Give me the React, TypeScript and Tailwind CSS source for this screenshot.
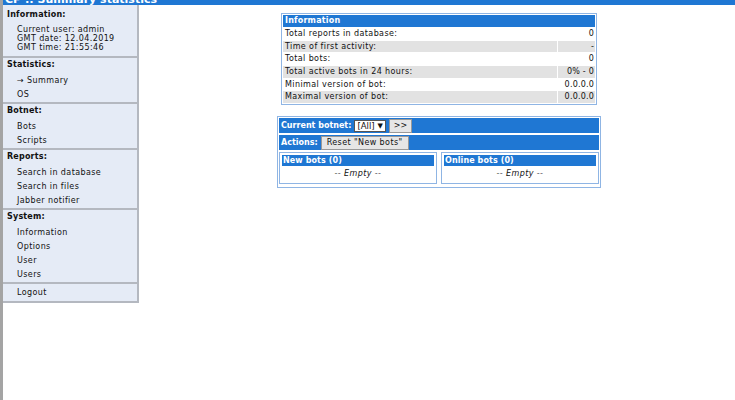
import React from "react";

const BLUE = "bg-[#1f77d3]";

function SideHeader({ children }: { children: React.ReactNode }) {
  return <div className="pl-[4px] h-[14px] leading-[14px] font-bold tracking-[0.2px] mb-[2px]">{children}</div>;
}

function SideItem({ children }: { children: React.ReactNode }) {
  return <div className="pl-[14px] h-[14px] leading-[14px]">{children}</div>;
}

function Section({ children }: { children: React.ReactNode }) {
  return <div className="border-b-2 border-b-[#b4b8c0]">{children}</div>;
}

const rows: [string, string][] = [
  ["Total reports in database:", "0"],
  ["Time of first activity:", "-"],
  ["Total bots:", "0"],
  ["Total active bots in 24 hours:", "0% - 0"],
  ["Minimal version of bot:", "0.0.0.0"],
  ["Maximal version of bot:", "0.0.0.0"],
];

function SubBox({ title }: { title: string }) {
  return (
    <div className="border border-[#8fb5e4] p-[2px] flex flex-col gap-[1px]">
      <div className={`${BLUE} text-white font-bold h-[11px] leading-[11px] px-[1px] tracking-[0.1px]`}>{title}</div>
      <div className="h-[14px] leading-[14px] text-center italic">-- Empty --</div>
    </div>
  );
}

export default function App() {
  return (
    <div
      className="w-[735px] h-[400px] overflow-hidden bg-white text-[8px] tracking-[0.4px] text-[#111] border-l-[3px] border-l-[#a4a4a4] flex flex-col"
      style={{ fontFamily: '"DejaVu Sans", Verdana, sans-serif' }}
    >
      <div className={`${BLUE} h-[5px] overflow-hidden shrink-0`}>
        <div className="text-white font-bold text-[11px] leading-[11px] mt-[-6px] pl-[2px] tracking-normal">CP :: Summary statistics</div>
      </div>
      <div className="flex flex-1 items-start">
        <div className="w-[136px] shrink-0 bg-[#e5ebf6] border-r-2 border-b-2 border-[#b4b8c0]">
          <div className="pt-[3px] pb-[4px] border-b-2 border-b-[#b4b8c0]">
            <div className="pl-[4px] h-[14px] leading-[14px] font-bold tracking-[0.2px]">Information:</div>
            <div className="pl-[14px] leading-[9px] pt-[3px]">
              <div>Current user: admin</div>
              <div>GMT date: 12.04.2019</div>
              <div>GMT time: 21:55:46</div>
            </div>
          </div>
          <Section>
            <SideHeader>Statistics:</SideHeader>
            <SideItem>→ Summary</SideItem>
            <SideItem>OS</SideItem>
          </Section>
          <Section>
            <SideHeader>Botnet:</SideHeader>
            <SideItem>Bots</SideItem>
            <SideItem>Scripts</SideItem>
          </Section>
          <Section>
            <SideHeader>Reports:</SideHeader>
            <SideItem>Search in database</SideItem>
            <SideItem>Search in files</SideItem>
            <SideItem>Jabber notifier</SideItem>
          </Section>
          <Section>
            <SideHeader>System:</SideHeader>
            <SideItem>Information</SideItem>
            <SideItem>Options</SideItem>
            <SideItem>User</SideItem>
            <SideItem>Users</SideItem>
          </Section>
          <div className="pt-[2px] pb-[1px]">
            <SideItem>Logout</SideItem>
          </div>
        </div>

        <div className="flex-1 flex flex-col items-center pt-[8px] pl-[4px] gap-[11px]">
          <div className="w-[316px] border border-[#8fb5e4] p-[1px] flex flex-col gap-[1px]">
            <div className={`${BLUE} text-white font-bold h-[12px] leading-[12px] px-[2px] tracking-[0.2px]`}>Information</div>
            {rows.map(([k, v], i) => (
              <div key={k} className="grid grid-cols-[1fr_37px] gap-[1px] h-[11.7px]">
                <div className={`${i % 2 ? "bg-[#e2e2e2]" : "bg-white"} px-[2px] leading-[11.7px] whitespace-nowrap`}>{k}</div>
                <div className={`${i % 2 ? "bg-[#e2e2e2]" : "bg-white"} px-[1px] leading-[11.7px] text-right whitespace-nowrap tracking-[0.2px]`}>{v}</div>
              </div>
            ))}
          </div>

          <div className="w-[324px] border border-[#8fb5e4] p-[1px] flex flex-col gap-[2px]">
            <div className={`${BLUE} h-[15px] flex items-center gap-[3px] px-[2px] text-white font-bold tracking-normal`}>
              <span>Current botnet:</span>
              <span className="bg-white text-[#111] font-normal border border-[#555] h-[12px] leading-[10px] px-[2px] text-[8.5px] flex items-center gap-[3px]">
                [All] <span className="text-[7px]">▼</span>
              </span>
              <span className="bg-[#e6e6e6] text-[#111] font-normal border border-[#999] h-[14px] w-[23px] text-center leading-[12px]">&gt;&gt;</span>
            </div>
            <div className={`${BLUE} h-[15px] flex items-center gap-[3px] px-[2px] text-white font-bold tracking-normal`}>
              <span>Actions:</span>
              <span className="bg-[#e6e6e6] text-[#111] font-normal border border-[#999] h-[14px] leading-[12px] px-[5px] tracking-[0.4px]">Reset "New bots"</span>
            </div>
            <div className="grid grid-cols-2 gap-[4px] pb-[2px]">
              <SubBox title="New bots (0)" />
              <SubBox title="Online bots (0)" />
            </div>
          </div>
        </div>
      </div>
    </div>
  );
}
